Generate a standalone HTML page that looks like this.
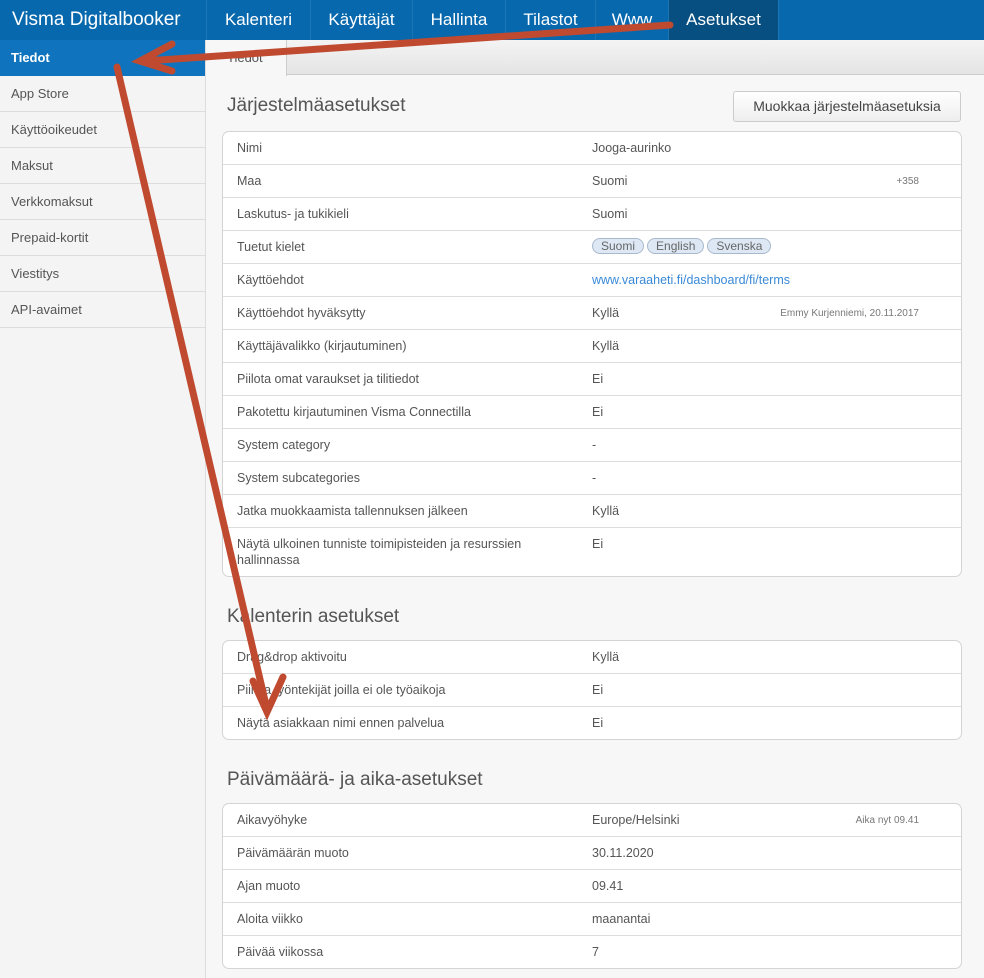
<!DOCTYPE html>
<html><head><meta charset="utf-8"><style>
*{box-sizing:border-box;margin:0;padding:0}
body{width:984px;height:978px;overflow:hidden;background:#f7f7f7;font-family:"Liberation Sans",sans-serif;color:#555;position:relative}
.nav{position:absolute;left:0;top:0;width:984px;height:40px;background:#0868ad;display:flex}
.nav div{height:40px;line-height:40px;color:#fff;font-size:17px;text-align:center;border-right:1px solid #1b75b5}
.nav .brand{width:207px;padding-left:12px;font-size:19px;text-align:left}
.nav .act{background:#074f80}
.side{position:absolute;left:0;top:40px;width:206px;height:938px;background:#f4f4f4;border-right:1px solid #ddd}
.side div{height:36px;line-height:36px;padding-left:11px;font-size:13px;border-bottom:1px solid #ddd;color:#555}
.side .on{background:#0f74bd;color:#fff;font-weight:bold;border-bottom:none}
.tabs{position:absolute;left:207px;top:40px;width:777px;height:35px;background:linear-gradient(#f4f4f4,#e4e4e4);border-bottom:1px solid #ccc}
.tab{position:absolute;left:0;top:0;width:80px;height:36px;background:#f7f7f7;border-right:1px solid #ccc;font-size:13px;padding:10px 0 0 20px;color:#555}
h2{position:absolute;left:227px;font-size:19px;font-weight:normal;color:#555}
.btn{position:absolute;left:733px;top:91px;width:228px;height:31px;border:1px solid #ccc;border-radius:3px;background:linear-gradient(#fff,#eee);font-size:14px;color:#444;text-align:center;line-height:29px}
.panel{position:absolute;left:222px;width:740px;background:#fff;border:1px solid #d4d4d4;border-radius:7px;overflow:hidden}
.row{height:33px;border-bottom:1px solid #ddd;position:relative;font-size:12.5px;line-height:16px}
.row:last-child{border-bottom:none}
.row .l{position:absolute;left:14px;top:8px;width:330px}
.row .v{position:absolute;left:369px;top:8px}
.row .n{position:absolute;right:42px;top:9px;font-size:10px;color:#777}
.a{color:#3a8ad6}
.pill{display:inline-block;border:1px solid #a9b9cc;background:#dde8f4;border-radius:9px;padding:0 8px;font-size:12px;line-height:14px;margin-right:3px;color:#666}
</style></head><body>
<div class="nav"><div class="brand">Visma Digitalbooker</div><div style="width:104px">Kalenteri</div><div style="width:102px">Käyttäjät</div><div style="width:93px">Hallinta</div><div style="width:90px">Tilastot</div><div style="width:73px">Www</div><div class="act" style="width:110px">Asetukset</div></div>
<div class="side"><div class="on">Tiedot</div><div>App Store</div><div>Käyttöoikeudet</div><div>Maksut</div><div>Verkkomaksut</div><div>Prepaid-kortit</div><div>Viestitys</div><div>API-avaimet</div></div>
<div class="tabs"><div class="tab">Tiedot</div></div>
<h2 style="top:95px">Järjestelmäasetukset</h2>
<div class="btn">Muokkaa järjestelmäasetuksia</div>
<div class="panel" style="top:131px;height:446px">
<div class="row"><span class="l">Nimi</span><span class="v">Jooga-aurinko</span></div>
<div class="row"><span class="l">Maa</span><span class="v">Suomi</span><span class="n">+358</span></div>
<div class="row"><span class="l">Laskutus- ja tukikieli</span><span class="v">Suomi</span></div>
<div class="row"><span class="l">Tuetut kielet</span><span class="v" style="top:7px"><span class="pill">Suomi</span><span class="pill">English</span><span class="pill">Svenska</span></span></div>
<div class="row"><span class="l">Käyttöehdot</span><span class="v a">www.varaaheti.fi/dashboard/fi/terms</span></div>
<div class="row"><span class="l">Käyttöehdot hyväksytty</span><span class="v">Kyllä</span><span class="n">Emmy Kurjenniemi, 20.11.2017</span></div>
<div class="row"><span class="l">Käyttäjävalikko (kirjautuminen)</span><span class="v">Kyllä</span></div>
<div class="row"><span class="l">Piilota omat varaukset ja tilitiedot</span><span class="v">Ei</span></div>
<div class="row"><span class="l">Pakotettu kirjautuminen Visma Connectilla</span><span class="v">Ei</span></div>
<div class="row"><span class="l">System category</span><span class="v">-</span></div>
<div class="row"><span class="l">System subcategories</span><span class="v">-</span></div>
<div class="row"><span class="l">Jatka muokkaamista tallennuksen jälkeen</span><span class="v">Kyllä</span></div>
<div class="row" style="height:50px"><span class="l">Näytä ulkoinen tunniste toimipisteiden ja resurssien hallinnassa</span><span class="v">Ei</span></div>
</div>
<h2 style="top:606px">Kalenterin asetukset</h2>
<div class="panel" style="top:640px;height:100px">
<div class="row"><span class="l">Drag&amp;drop aktivoitu</span><span class="v">Kyllä</span></div>
<div class="row"><span class="l">Piilota työntekijät joilla ei ole työaikoja</span><span class="v">Ei</span></div>
<div class="row"><span class="l">Näytä asiakkaan nimi ennen palvelua</span><span class="v">Ei</span></div>
</div>
<h2 style="top:769px">Päivämäärä- ja aika-asetukset</h2>
<div class="panel" style="top:803px;height:166px">
<div class="row"><span class="l">Aikavyöhyke</span><span class="v">Europe/Helsinki</span><span class="n">Aika nyt 09.41</span></div>
<div class="row"><span class="l">Päivämäärän muoto</span><span class="v">30.11.2020</span></div>
<div class="row"><span class="l">Ajan muoto</span><span class="v">09.41</span></div>
<div class="row"><span class="l">Aloita viikko</span><span class="v">maanantai</span></div>
<div class="row"><span class="l">Päivää viikossa</span><span class="v">7</span></div>
</div>
<svg style="position:absolute;left:0;top:0" width="984" height="978">
<g stroke="#c04a30" stroke-width="7" fill="none" stroke-linecap="round">
<line x1="670" y1="25" x2="145" y2="61"/>
<polyline points="172,44 140,61 172,71"/>
<line x1="117" y1="67" x2="266" y2="705"/>
<polyline points="253,681 267,712 283,677"/>
</g></svg>
</body></html>
